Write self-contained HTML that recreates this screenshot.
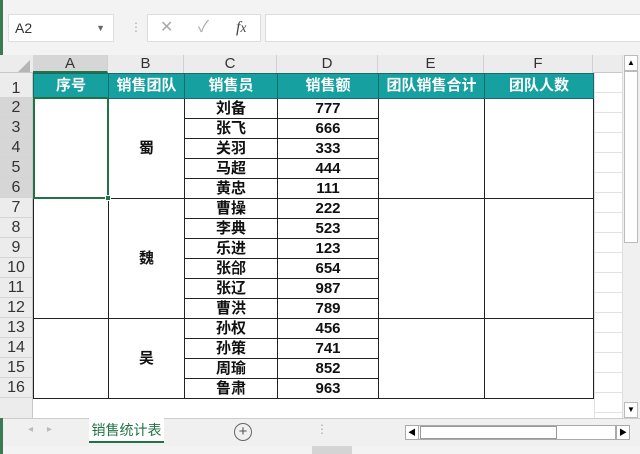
<!DOCTYPE html>
<html><head><meta charset="utf-8"><style>
*{margin:0;padding:0;box-sizing:border-box}
body{width:640px;height:454px;overflow:hidden;background:#fff;position:relative;font-family:"Liberation Sans","Noto Sans CJK SC",sans-serif}
.a{position:absolute}
.rh{position:absolute;left:0;width:33px;text-align:center;font-size:16px;color:#333;border-bottom:1px solid #d4d4d4;background:#ececec;border-right:1px solid #c8c8c8}
.ch{position:absolute;top:55px;height:18px;text-align:center;font-size:15px;color:#333;line-height:18px;border-right:1px solid #d0d0d0;background:#ececec}
table{position:absolute;left:33px;top:73px;border-collapse:collapse;table-layout:fixed}
td{border:1px solid #222;text-align:center;font-weight:bold;font-size:15px;padding:0;color:#111;line-height:16px;height:20px;overflow:hidden}
tr.h td{background:#17a0a0;color:#fff;height:25px;border-color:#1a6a6a;font-size:15px}
tr{height:20px}
tr.h{height:25px}
</style></head><body>
<div class="a" style="left:0;top:0;width:640px;height:55px;background:#f3f3f3"></div>
<div class="a" style="left:0;top:0;width:3px;height:454px;background:#3b7a57"></div>
<div class="a" style="left:8px;top:14px;width:106px;height:28px;background:#fff;border:1px solid #ddd;font-size:14px;line-height:26px;padding-left:6px;color:#333">A2<span style="position:absolute;right:8px;top:0;font-size:9px;color:#666">▼</span></div>
<div class="a" style="left:130px;top:20px;color:#aaa;font-size:12px">⋮</div>
<div class="a" style="left:147px;top:14px;width:114px;height:28px;background:#fff;border:1px solid #ddd;color:#aaa;font-size:16px;line-height:26px"><span style="position:absolute;left:12px">✕</span><span style="position:absolute;left:50px">✓</span><span style="position:absolute;left:88px;color:#444;font-style:italic;font-family:'Liberation Serif',serif">f<small>x</small></span></div>
<div class="a" style="left:265px;top:14px;width:380px;height:28px;background:#fff;border:1px solid #ddd"></div>
<div class="a" style="left:0;top:55px;width:622px;height:18px;background:#ececec;border-bottom:1px solid #c8c8c8"></div>
<div class="a" style="left:18px;top:60px;width:0;height:0;border-left:12px solid transparent;border-bottom:12px solid #b5b5b5"></div>
<div class="ch" style="left:33px;width:75px;background:#d6d6d6;border-bottom:2px solid #217346">A</div>
<div class="ch" style="left:108px;width:76px">B</div>
<div class="ch" style="left:184px;width:93px">C</div>
<div class="ch" style="left:277px;width:101px">D</div>
<div class="ch" style="left:378px;width:106px">E</div>
<div class="ch" style="left:484px;width:109px">F</div>
<div class="rh" style="top:73px;height:25px;line-height:32px">1</div>
<div class="rh" style="top:98px;height:20px;line-height:20px;background:#d6d6d6">2</div>
<div class="rh" style="top:118px;height:20px;line-height:20px;background:#d6d6d6">3</div>
<div class="rh" style="top:138px;height:20px;line-height:20px;background:#d6d6d6">4</div>
<div class="rh" style="top:158px;height:20px;line-height:20px;background:#d6d6d6">5</div>
<div class="rh" style="top:178px;height:20px;line-height:20px;background:#d6d6d6">6</div>
<div class="rh" style="top:198px;height:20px;line-height:20px">7</div>
<div class="rh" style="top:218px;height:20px;line-height:20px">8</div>
<div class="rh" style="top:238px;height:20px;line-height:20px">9</div>
<div class="rh" style="top:258px;height:20px;line-height:20px">10</div>
<div class="rh" style="top:278px;height:20px;line-height:20px">11</div>
<div class="rh" style="top:298px;height:20px;line-height:20px">12</div>
<div class="rh" style="top:318px;height:20px;line-height:20px">13</div>
<div class="rh" style="top:338px;height:20px;line-height:20px">14</div>
<div class="rh" style="top:358px;height:20px;line-height:20px">15</div>
<div class="rh" style="top:378px;height:20px;line-height:20px">16</div>
<div class="rh" style="top:398px;height:20px;border-bottom:none"></div>
<div class="a" style="left:594px;top:73px;width:28px;height:345px;background:repeating-linear-gradient(#fff 0 19px,#e2e2e2 19px 20px);border-left:1px solid #e2e2e2"></div>
<table>
<colgroup><col style="width:75px"><col style="width:76px"><col style="width:93px"><col style="width:101px"><col style="width:106px"><col style="width:109px"></colgroup>
<tr class="h"><td>序号</td><td>销售团队</td><td>销售员</td><td>销售额</td><td>团队销售合计</td><td>团队人数</td></tr>
<tr><td rowspan="5"></td><td rowspan="5">蜀</td><td>刘备</td><td>777</td><td rowspan="5"></td><td rowspan="5"></td></tr>
<tr><td>张飞</td><td>666</td></tr>
<tr><td>关羽</td><td>333</td></tr>
<tr><td>马超</td><td>444</td></tr>
<tr><td>黄忠</td><td>111</td></tr>
<tr><td rowspan="6"></td><td rowspan="6">魏</td><td>曹操</td><td>222</td><td rowspan="6"></td><td rowspan="6"></td></tr>
<tr><td>李典</td><td>523</td></tr>
<tr><td>乐进</td><td>123</td></tr>
<tr><td>张郃</td><td>654</td></tr>
<tr><td>张辽</td><td>987</td></tr>
<tr><td>曹洪</td><td>789</td></tr>
<tr><td rowspan="4"></td><td rowspan="4">吴</td><td>孙权</td><td>456</td><td rowspan="4"></td><td rowspan="4"></td></tr>
<tr><td>孙策</td><td>741</td></tr>
<tr><td>周瑜</td><td>852</td></tr>
<tr><td>鲁肃</td><td>963</td></tr>
</table>
<div class="a" style="left:33px;top:97px;width:76px;height:102px;border:2px solid #217346"></div>
<div class="a" style="left:105px;top:195px;width:6px;height:6px;background:#217346;border:1px solid #fff"></div>
<div class="a" style="left:622px;top:55px;width:18px;height:363px;background:#f0f0f0;border-left:1px solid #ddd"></div>
<div class="a" style="left:624px;top:55px;width:14px;height:16px;background:#fff;border:1px solid #bbb;font-size:8px;text-align:center;line-height:14px">▲</div>
<div class="a" style="left:624px;top:71px;width:14px;height:172px;background:#fff;border:1px solid #bbb"></div>
<div class="a" style="left:624px;top:402px;width:14px;height:16px;background:#fff;border:1px solid #bbb;font-size:8px;text-align:center;line-height:14px">▼</div>
<div class="a" style="left:3px;top:418px;width:637px;height:28px;background:#f0f0f0;border-top:1px solid #ccc"></div>
<div class="a" style="left:28px;top:424px;color:#bbb;font-size:10px">◂ &nbsp;&nbsp;&nbsp; ▸</div>
<div class="a" style="left:89px;top:417px;width:75px;height:26px;background:#fff;border-bottom:2px solid #217346;color:#217346;font-size:14px;text-align:center;line-height:26px">销售统计表</div>
<div class="a" style="left:234px;top:423px;width:18px;height:18px;border:1px solid #666;border-radius:50%;text-align:center;line-height:16px;font-size:15px;color:#555">+</div>
<div class="a" style="left:316px;top:422px;color:#aaa;font-size:12px">⋮</div>
<div class="a" style="left:405px;top:425px;width:211px;height:15px;background:#fff;border:1px solid #aaa"></div>
<div class="a" style="left:405px;top:425px;width:14px;height:15px;border:1px solid #aaa;font-size:8px;text-align:center;line-height:13px">◀</div>
<div class="a" style="left:420px;top:426px;width:137px;height:13px;border:1px solid #999"></div>
<div class="a" style="left:616px;top:425px;width:14px;height:15px;background:#fff;border:1px solid #aaa;font-size:8px;text-align:center;line-height:13px">▶</div>
<div class="a" style="left:3px;top:446px;width:637px;height:8px;background:#f3f3f3"></div>
<div class="a" style="left:312px;top:446px;width:40px;height:8px;background:#d4d4d4"></div>
</body></html>
